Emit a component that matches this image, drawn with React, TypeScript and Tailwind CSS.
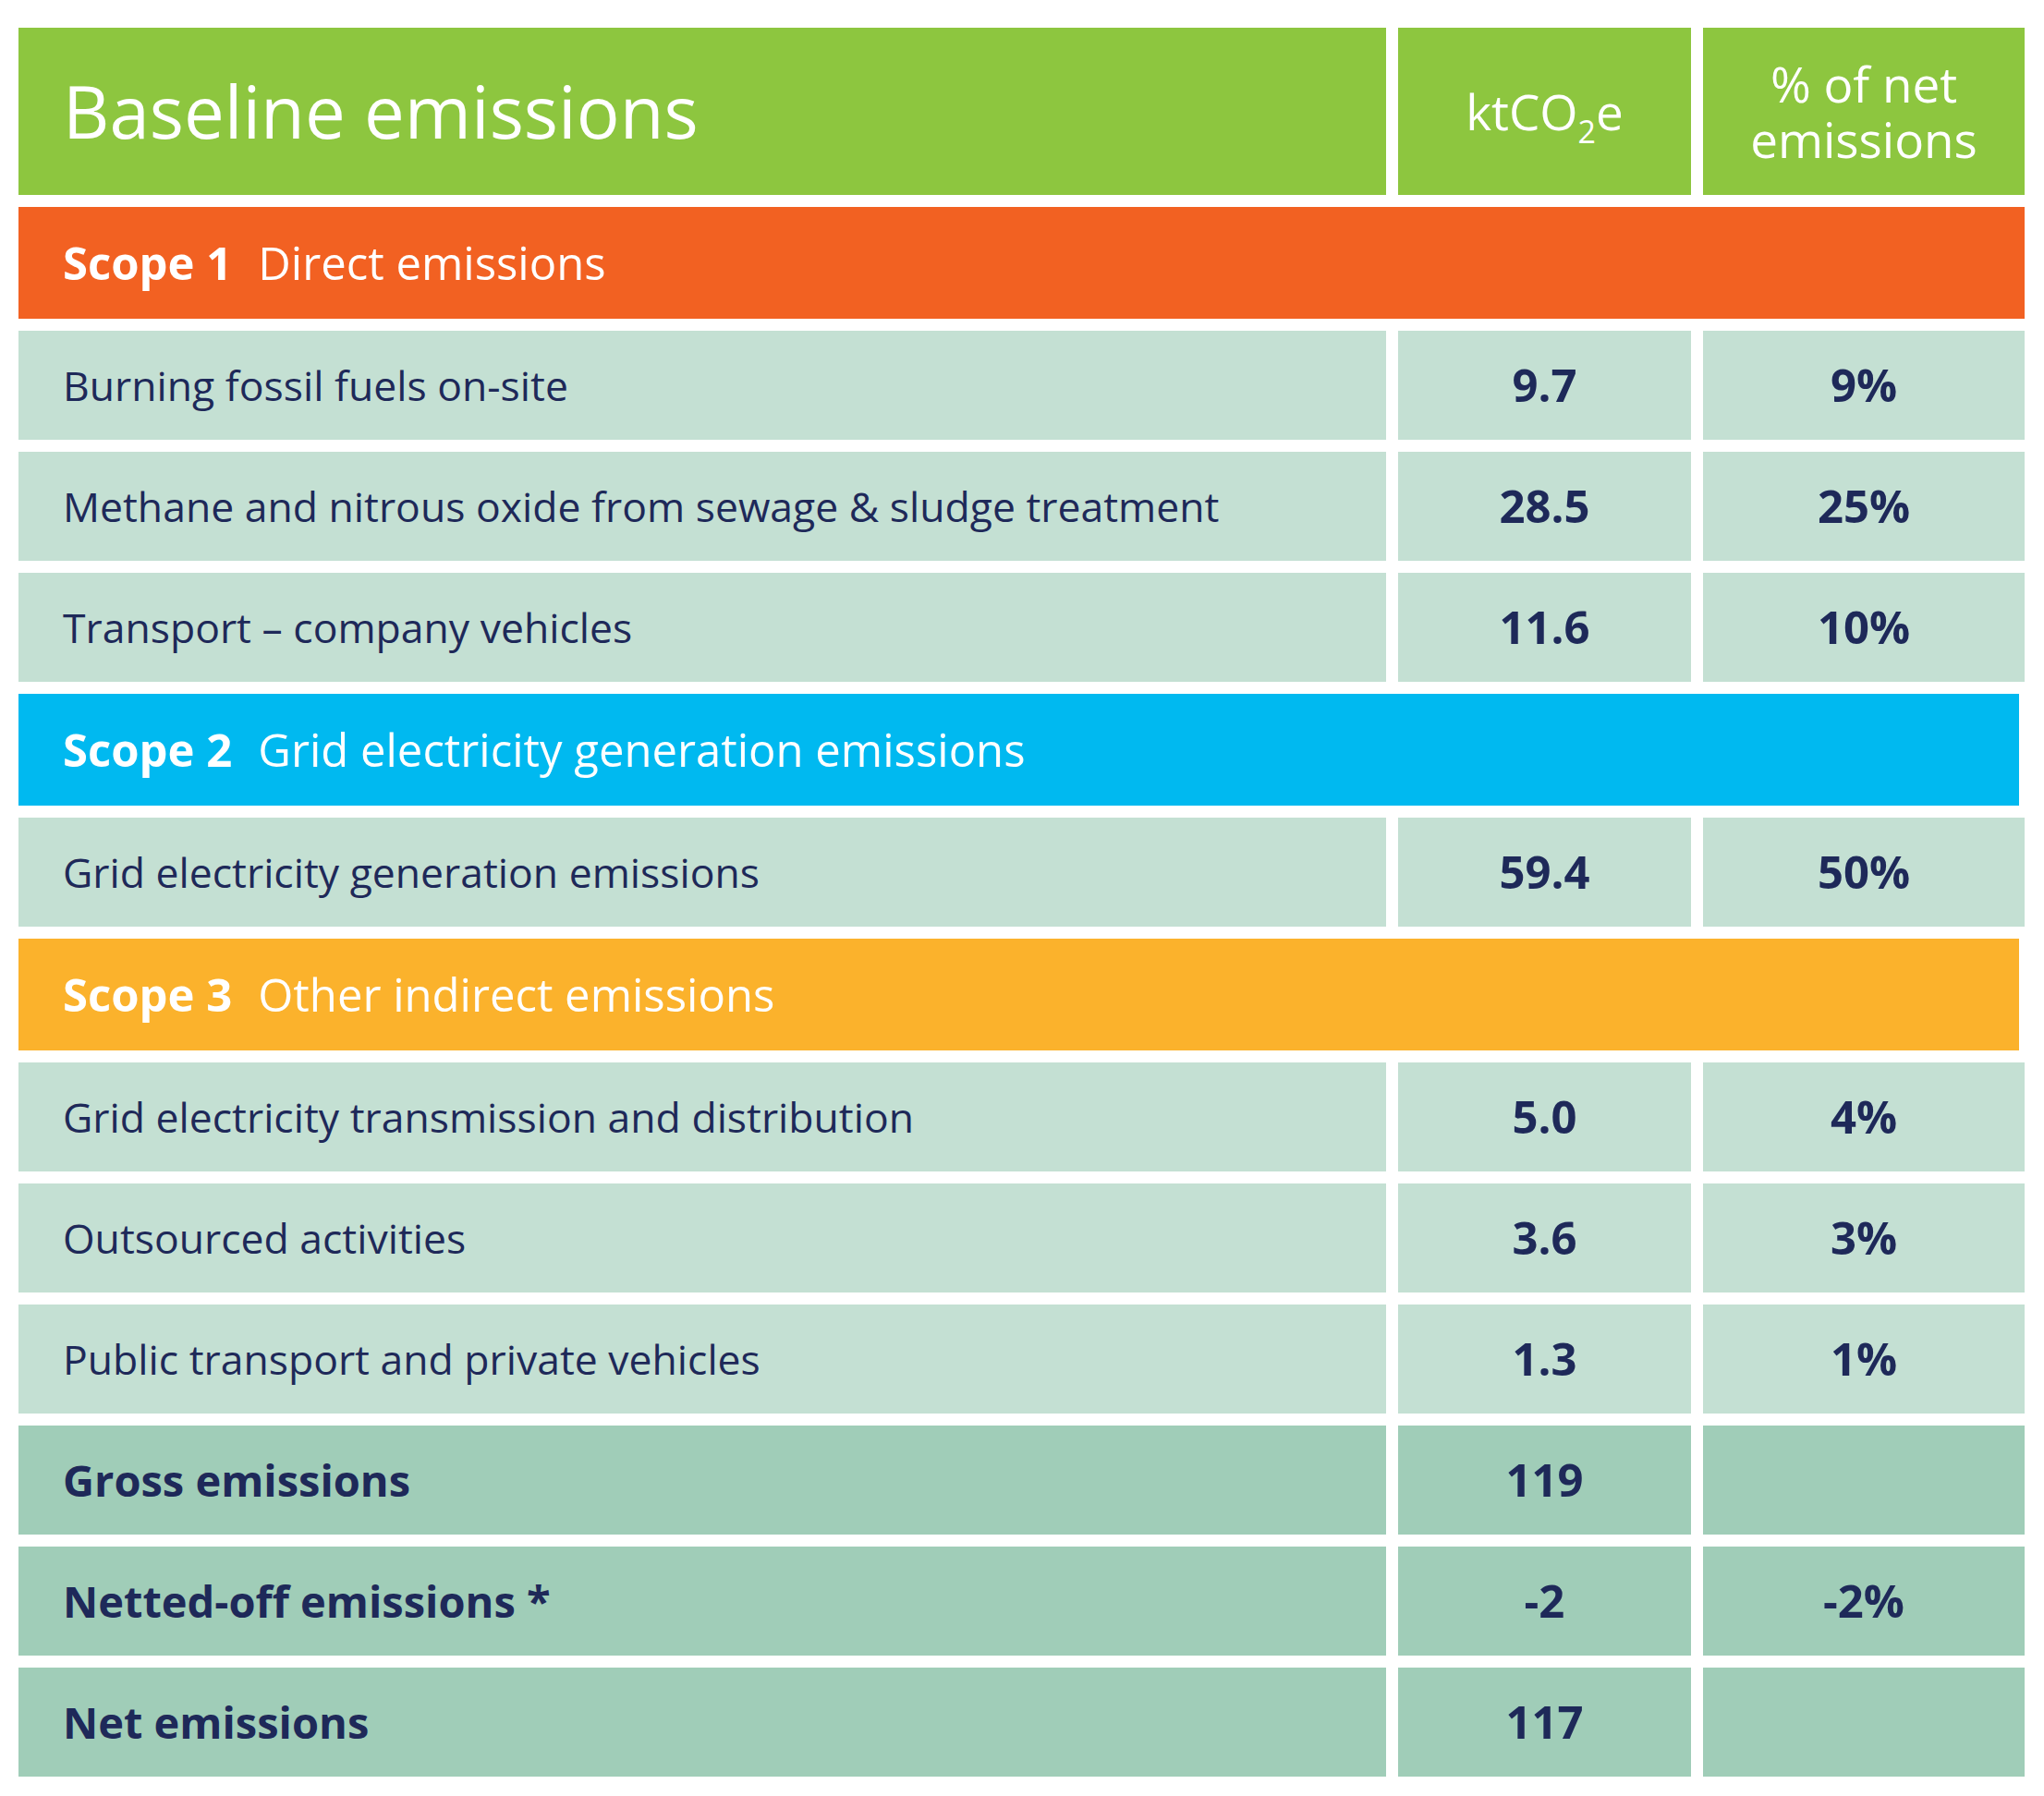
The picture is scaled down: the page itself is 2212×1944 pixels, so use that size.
const font = { fontFamily: "'Open Sans', Lato, sans-serif" };

type Row = { label: string; value: string; pct: string };

const scope1: Row[] = [
  { label: "Burning fossil fuels on-site", value: "9.7", pct: "9%" },
  { label: "Methane and nitrous oxide from sewage & sludge treatment", value: "28.5", pct: "25%" },
  { label: "Transport – company vehicles", value: "11.6", pct: "10%" },
];

const scope2: Row[] = [{ label: "Grid electricity generation emissions", value: "59.4", pct: "50%" }];

const scope3: Row[] = [
  { label: "Grid electricity transmission and distribution", value: "5.0", pct: "4%" },
  { label: "Outsourced activities", value: "3.6", pct: "3%" },
  { label: "Public transport and private vehicles", value: "1.3", pct: "1%" },
];

const totals: Row[] = [
  { label: "Gross emissions", value: "119", pct: "" },
  { label: "Netted-off emissions *", value: "-2", pct: "-2%" },
  { label: "Net emissions", value: "117", pct: "" },
];

function DataRow({ row, total }: { row: Row; total?: boolean }) {
  const bg = total ? "bg-[#a0cdb8]" : "bg-[#c4e0d3]";
  return (
    <div className="grid h-[118px] grid-cols-[1480px_317px_348px] gap-x-[13px] text-[#1e2959]">
      <div className={`flex items-center pl-[48px] ${total ? "text-[47px] font-bold" : "text-[44.5px]"} ${bg}`}>
        {row.label}
      </div>
      <div className={`flex items-center justify-center text-[49px] font-bold ${bg}`}>{row.value}</div>
      <div className={`flex items-center justify-center text-[49px] font-bold ${bg}`}>{row.pct}</div>
    </div>
  );
}

function ScopeBand({ num, title, color }: { num: string; title: string; color: string }) {
  return (
    <div className={`flex h-[121px] items-center pl-[48px] text-[49px] text-white ${color}`}>
      <span className="font-bold">Scope {num}</span>
      <span className="ml-[28px]">{title}</span>
    </div>
  );
}

export default function App() {
  return (
    <div className="min-h-[1944px] w-[2212px] bg-white pt-[30px] pl-[20px]" style={font}>
      <div className="flex w-[2171px] flex-col gap-[13px]">
        <div className="grid h-[181px] grid-cols-[1480px_317px_348px] gap-x-[13px] text-white">
          <div className="flex items-center bg-[#8dc63f] pl-[48px] text-[78px]">Baseline emissions</div>
          <div className="flex items-center justify-center bg-[#8dc63f] text-[53px]">
            <span>
              ktCO<span className="relative top-[14px] text-[34px]">2</span>e
            </span>
          </div>
          <div className="flex items-center justify-center bg-[#8dc63f] text-center text-[53px] leading-[60px]">
            % of net
            <br />
            emissions
          </div>
        </div>

        <ScopeBand num="1" title="Direct emissions" color="bg-[#f26122]" />
        {scope1.map((r) => (
          <DataRow key={r.label} row={r} />
        ))}

        <div className="mr-[6px]">
          <ScopeBand num="2" title="Grid electricity generation emissions" color="bg-[#00b9f0]" />
        </div>
        {scope2.map((r) => (
          <DataRow key={r.label} row={r} />
        ))}

        <div className="mr-[6px]">
          <ScopeBand num="3" title="Other indirect emissions" color="bg-[#fbb22c]" />
        </div>
        {scope3.map((r) => (
          <DataRow key={r.label} row={r} />
        ))}

        {totals.map((r) => (
          <DataRow key={r.label} row={r} total />
        ))}
      </div>
    </div>
  );
}
